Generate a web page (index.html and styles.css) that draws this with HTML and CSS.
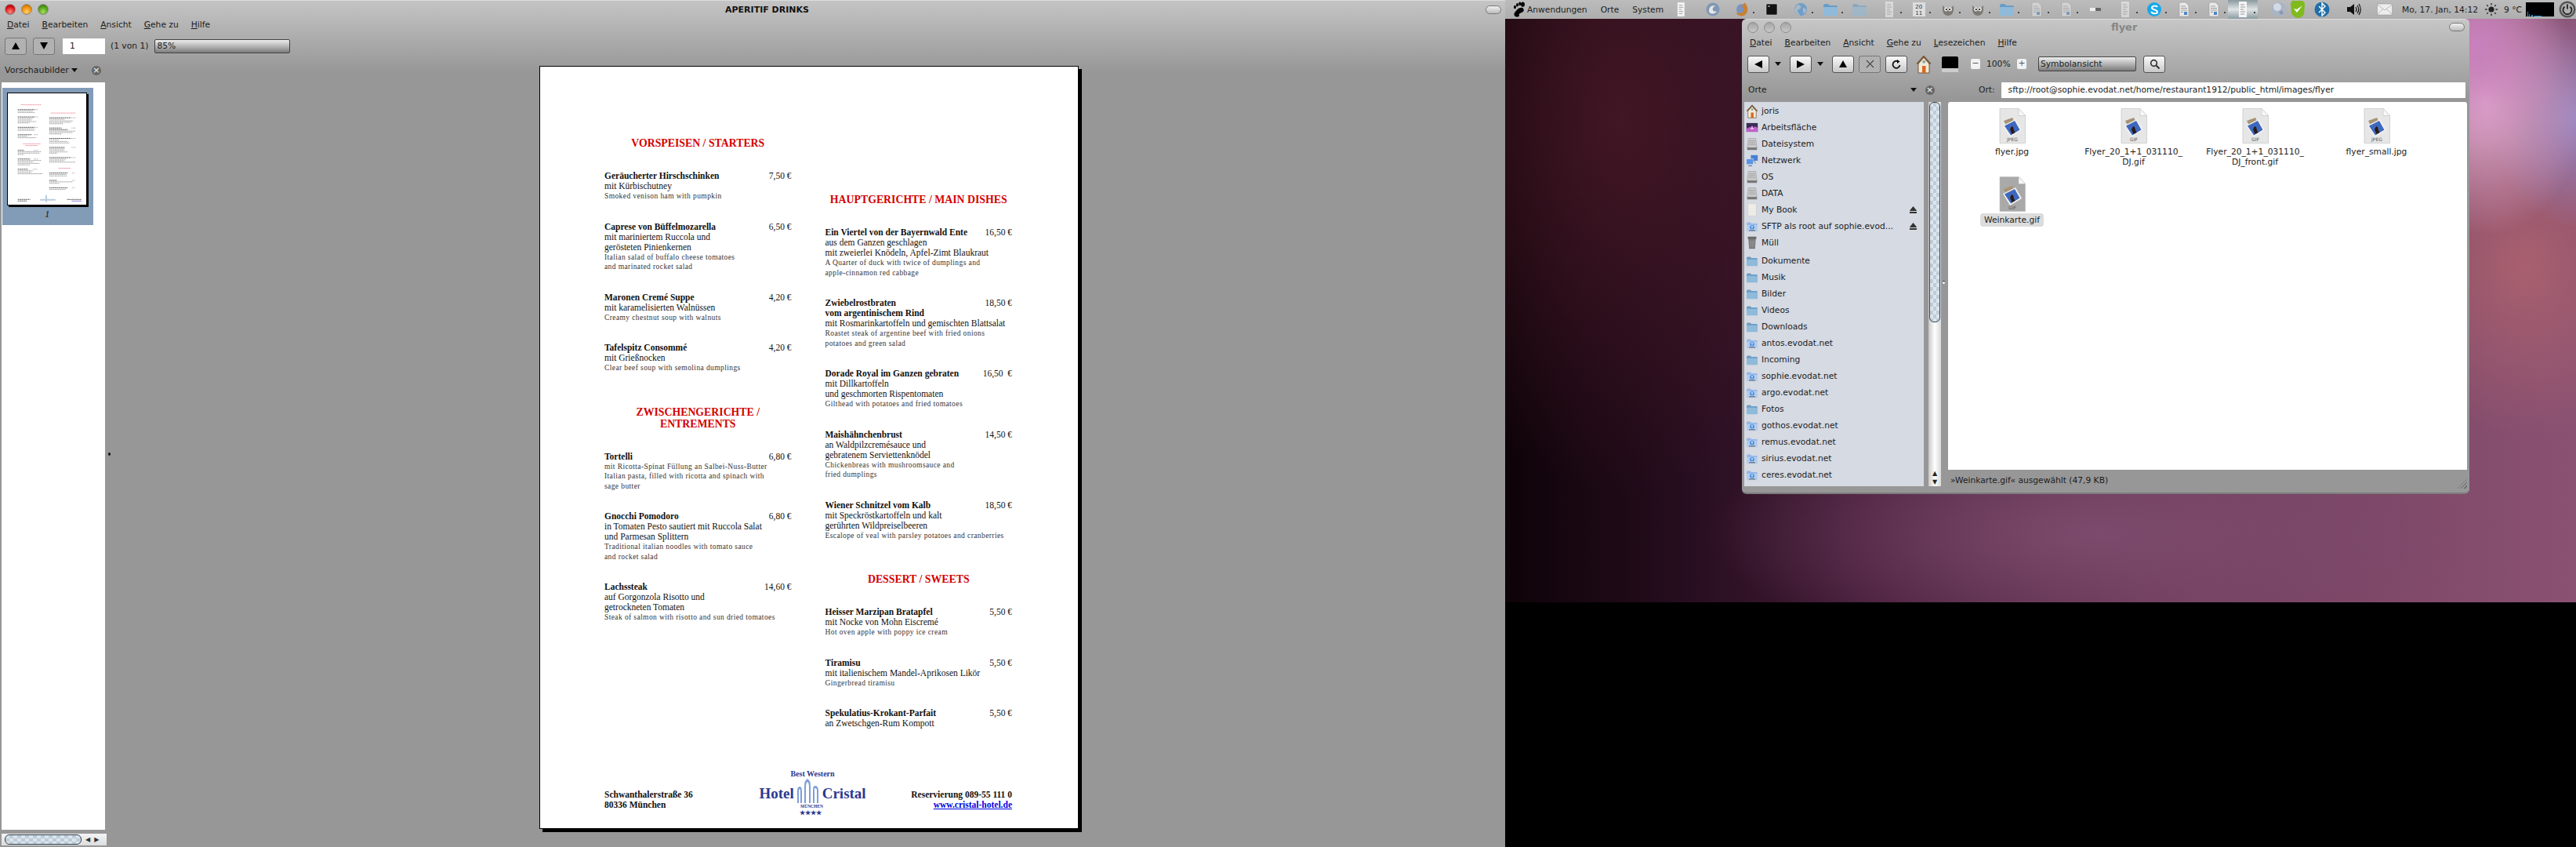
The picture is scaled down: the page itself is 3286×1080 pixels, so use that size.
FILE: index.html
```html
<!DOCTYPE html>
<html lang="de">
<head>
  <meta charset="UTF-8" />
  <title>APERITIF DRINKS</title>
  <link rel="stylesheet" href="styles.css">
</head>
<body>
  <svg class="defs" width="0" height="0">
    <defs>
      <symbol id="i-foot" viewBox="0 0 18 20">
        <ellipse cx="4.500" cy="7" rx="1.500" ry="2.200"/><ellipse cx="7.500" cy="4.300" rx="1.500" ry="2.300"/><ellipse cx="10.800" cy="2.800" rx="1.600" ry="2.400"/><ellipse cx="14.500" cy="3.600" rx="2.400" ry="3.200"/>
        <path d="M14 8c3 2 2 5-1 6-2 1-4 1.500-3 3.500.5 1-1.500 2.500-3.500 2C3.500 19 2.500 16 4.500 13.500 7 10.500 10 7 14 8z"/>
      </symbol>
      <symbol id="i-thumb" viewBox="0 0 12 20"><rect x="1" y="0" width="10" height="20" fill="#f4f4f4"/><path d="M3 4h5M3 7h6M3 10h4M3 13h6M3 16h5" stroke="#999"/></symbol>
      <symbol id="i-bird" viewBox="0 0 20 20"><circle cx="10" cy="10" r="8.500" fill="#7f97b5"/><path d="M5 12c0-5 4-8 9-6-3 0-5 2-4 5 1 2 4 2 5 1-1 4-10 5-10 0z" fill="#e6e6e6"/></symbol>
      <symbol id="i-fox" viewBox="0 0 20 20"><circle cx="10" cy="10" r="7" fill="#7b93c0"/><path d="M13 1c5 4 6 12 1 16-4 3-10 1-12-3 3 2 8 1 10-2 1-3 0-5-3-6 2-1 4-2 4-5z" fill="#c98032"/></symbol>
      <symbol id="i-term" viewBox="0 0 20 20"><rect x="3" y="3" width="14" height="14" rx="1" fill="#111" stroke="#ccc" stroke-width=".6"/><path d="M5 6h3" stroke="#ddd"/></symbol>
      <symbol id="i-globe" viewBox="0 0 20 20"><circle cx="10" cy="10" r="8" fill="#6f9ecb"/><path d="M6 4c3 0 5 1 4 4S6 9 6 12s3 3 3 6c-3 0-6-3-7-7 1-3 2-6 4-7zM13 8c2 0 4 1 4 3s-2 4-3 4-1-3-1-7z" fill="#a8b8c2"/></symbol>
      <symbol id="i-folder" viewBox="0 0 20 18"><path d="M1 4q0-2 2-2h4l2 2h8q2 0 2 2v10H1z" fill="#6b9cc4"/><path d="M1 6h18v10q0 1-1 1H2q-1 0-1-1z" fill="#8fbad9"/></symbol>
      <symbol id="i-doc" viewBox="0 0 16 20"><path d="M2 1h8l4 4v14H2z" fill="#e8e8e8" stroke="#999" stroke-width=".6"/><path d="M4 6h6M4 8.500h8M4 11h8M4 13.500h3" stroke="#8a8a8a" stroke-width=".8"/><rect x="8" y="13" width="4" height="4" fill="#4f86c6"/></symbol>
      <symbol id="i-gimp" viewBox="0 0 20 20"><path d="M3 5l3 3h8l3-3v6q-1 7-7 7T3 11z" fill="#7c7a72"/><circle cx="7.500" cy="10" r="2.400" fill="#eee"/><circle cx="12.500" cy="10" r="2.400" fill="#eee"/><circle cx="7.800" cy="10" r="1"/><circle cx="12.200" cy="10" r="1"/></symbol>
      <symbol id="i-skype" viewBox="0 0 20 20"><circle cx="10" cy="10" r="9" fill="#18a8e8"/><path d="M14 7c-1-2-7-2-7 1s7 2 7 5-6 3-8 0" fill="none" stroke="#fff" stroke-width="2"/></symbol>
      <symbol id="i-moon" viewBox="0 0 20 22"><circle cx="10" cy="11" r="9.500" fill="#a9b5c6"/><circle cx="8" cy="8" r="5" fill="#d4dae4"/><circle cx="13" cy="15" r="2.500" fill="#8c99ab"/></symbol>
      <symbol id="i-shield" viewBox="0 0 20 24"><path d="M3 1h12q4 1 4 5l-1 12q-3 5-8 5-6-2-8-6L1 4z" fill="#7fba1e"/><path d="M5 11l4 5 7-9-7 5z" fill="#fff"/></symbol>
      <symbol id="i-bt" viewBox="0 0 20 22"><circle cx="10" cy="11" r="9.500" fill="#1f6ea8"/><path d="M6 7l8 8-4 4V3l4 4-8 8" fill="none" stroke="#fff" stroke-width="1.400"/></symbol>
      <symbol id="i-speaker" viewBox="0 0 20 20"><path d="M2 7h4l5-4v14l-5-4H2z" fill="#111"/><path d="M13 7q2 3 0 6M15 5q3.500 5 0 10M17 3q4.500 7 0 14" fill="none" stroke="#111" stroke-width="1.200"/></symbol>
      <symbol id="i-mail" viewBox="0 0 20 16"><rect x=".5" y="1" width="19" height="14" fill="#eee" stroke="#999" stroke-width=".6"/><path d="M1 2l9 7 9-7M1 14l7-7M19 14l-7-7" fill="none" stroke="#aaa" stroke-width=".8"/></symbol>
      <symbol id="i-sun" viewBox="0 0 20 20"><circle cx="10" cy="10" r="4" fill="#222"/><path d="M10 1v3M10 16v3M1 10h3M16 10h3M3.500 3.500l2 2M14.500 14.500l2 2M3.500 16.500l2-2M14.500 5.500l2-2" stroke="#333" stroke-width="1.600"/></symbol>
      <symbol id="i-power" viewBox="0 0 22 24"><circle cx="11" cy="12" r="10.500" fill="#555"/><circle cx="11" cy="12" r="8" fill="#b0b0b0"/><path d="M7.500 8.500a5.500 5.500 0 1 0 7 0" fill="none" stroke="#222" stroke-width="1.800"/><path d="M11 5.500v6" stroke="#222" stroke-width="1.800"/></symbol>
      <symbol id="i-home" viewBox="0 0 20 24"><path d="M10 1L1 11h2v12h14V11h2z" fill="#f2ead8" stroke="#6b4d2f" stroke-width=".9"/><path d="M10 1L1 11l2 1 7-8 7 8 2-1z" fill="#7a5a3a"/><rect x="8" y="14" width="4.500" height="9" fill="#d9681e"/><rect x="8.500" y="7" width="3.500" height="3.500" fill="#8aa"/></symbol>
      <symbol id="i-desk" viewBox="0 0 20 18"><rect x="1" y="2" width="18" height="14" fill="#3a2b55"/><path d="M1 11l6-3 3 3 5-4 4 3v6H1z" fill="#c060c8"/><path d="M7 12l3-6 3 6z" fill="#e9b6ef"/></symbol>
      <symbol id="i-hdd" viewBox="0 0 20 22"><path d="M4 2h12l2 16H2z" fill="#c9c9c9" stroke="#888" stroke-width=".6"/><path d="M5 6h10M5 9h10M4.500 12h11" stroke="#999"/><rect x="2" y="17" width="16" height="4" fill="#777"/></symbol>
      <symbol id="i-net" viewBox="0 0 20 20"><rect x="8" y="1" width="11" height="9" fill="#4a7fd0"/><rect x="1" y="7" width="11" height="9" fill="#5c93e4" stroke="#e0e8f4" stroke-width=".7"/><path d="M4 18h6M12 10l4 4" stroke="#567" stroke-width="1.200"/></symbol>
      <symbol id="i-book" viewBox="0 0 20 22"><rect x="3" y="1" width="14" height="20" rx="1" fill="#eeece6" stroke="#c8c8c0" stroke-width=".6"/></symbol>
      <symbol id="i-remote" viewBox="0 0 20 18"><path d="M1 4q0-2 2-2h4l2 2h8q2 0 2 2v10H1z" fill="#93b6e8"/><path d="M1 6h18v10q0 1-1 1H2q-1 0-1-1z" fill="#b2cdf0"/><circle cx="10" cy="10" r="3.500" fill="#2f7fd6"/><path d="M10 7v6M8 9h4" stroke="#fff"/><rect x="5" y="14.500" width="10" height="1.500" fill="#666"/></symbol>
      <symbol id="i-trash" viewBox="0 0 20 22"><rect x="3" y="1" width="14" height="4" fill="#666"/><path d="M4 5h12l-1 16H5z" fill="#777"/><path d="M7 7v12M10 7v12M13 7v12" stroke="#aaa"/></symbol>
      <symbol id="i-file" viewBox="0 0 36 46">
        <path class="file-page" d="M2 .5h24l8.500 9v35H2z"/><path d="M26 .5v9h8.500z" fill="#f8f8f8" stroke="#b5b5b5" stroke-width=".5"/>
        <path d="M7 16l11-4 4 8-11 4z" fill="#a79474"/>
        <path d="M6 22l16-8 8 14-15 9z" fill="#f2f2f2"/><path d="M8 22.500l13-6.500 6.500 11.500L16 34.500z" fill="#3e68bd"/>
        <path d="M15 27l2-4 2 1 1 4 1.500 3-4 2z" fill="#2b1a14"/>
      </symbol>
    </defs>
  </svg>

  <div class="screen">
    <!-- PDF viewer, left monitor -->
    <section class="doc-window">
      <header class="doc-titlebar">
        <span class="light red"></span><span class="light orange"></span><span class="light green"></span>
        <span class="doc-title">APERITIF DRINKS</span>
        <span class="pill"></span>
      </header>
      <nav class="menubar doc-menu">
        <span><u>D</u>atei</span><span><u>B</u>earbeiten</span><span><u>A</u>nsicht</span><span><u>G</u>ehe zu</span><span><u>H</u>ilfe</span>
      </nav>
      <div class="doc-toolbar">
        <span class="btn hatched"><svg width="10" height="9" viewBox="0 0 10 9"><path d="M5 0l5 9H0z"/></svg></span>
        <span class="btn hatched"><svg width="10" height="9" viewBox="0 0 10 9"><path d="M0 0h10L5 9z"/></svg></span>
        <span class="page-entry">1</span>
        <span class="page-count">(1 von 1)</span>
        <span class="combo zoom-combo">85%</span>
      </div>
      <div class="doc-body">
        <aside class="doc-side">
          <div class="side-head">
            <span>Vorschaubilder</span><span class="caret"></span>
            <span class="close-x">×</span>
          </div>
          <div class="thumbs">
            <figure class="thumb-box">
              <svg class="thumb" width="102" height="144" viewBox="0 0 102 144">
                <path stroke="#444" stroke-width="1" stroke-dasharray="1.200 .5" fill="none" d="M13 20.700h22M13 30.300h22M13 43.800h22M13 53.400h18M13 73.700h8M13 85h16M13 98.300h13M54 31.400h28M54 44.700h16M54 46.800h24M54 58.200h28M54 69.900h20M54 83.200h28M54 103.200h24M54 112.800h10M54 122.400h24M13 137.600h16M13 139.600h12M77 137.600h19"/>
                <path stroke="#888" stroke-width=".9" stroke-dasharray="1.200 .6" fill="none" d="M13 22.600h20M13 24.600h22M13 32.300h20M13 34.300h18M13 36.300h24M13 38h15M13 45.700h22M13 47.700h22M13 55.400h12M13 57.300h24M13 75.600h30M13 77.400h28M13 79.200h8M13 86.900h30M13 88.800h20M13 90.700h28M13 92.600h16M13 100.300h20M13 102.300h18M13 104.200h32M54 33.300h20M54 35.400h31M54 37.300h28M54 39.100h18M54 48.700h34M54 50.600h30M54 52.400h16M54 60.100h12M54 62.200h24M54 64.100h26M54 71.800h20M54 73.700h20M54 75.800h24M54 77.400h10M54 85.200h22M54 87.200h20M54 89.100h34M54 105.100h22M54 107h23M54 114.700h30M54 116.600h13M54 124.500h21"/>
                <path stroke="#888" stroke-width=".9" stroke-dasharray="1 1" fill="none" d="M34 20.700h5M34 30.300h5M34 43.800h5M34 53.400h5M34 73.700h5M34 85h5M33 98.300h6M83 31.400h5M83 44.700h5M83 58.200h5M83 69.900h5M83 83.200h5M84 103.200h4M84 112.800h4M84 122.400h4"/>
                <path stroke="#e78" stroke-width=".9" stroke-dasharray="1.300 .6" fill="none" d="M17 14.500h26M20 65.300h23M23 67.500h16M56 25.200h32M66 97h16"/>
                <path stroke="#bcd" stroke-width="2" fill="none" d="M42 138h20M50 132v9"/><path stroke="#88d" stroke-width="1" fill="none" d="M83 139.700h13"/>
              </svg>
              <figcaption>1</figcaption>
            </figure>
          </div>
          <div class="hscroll"><span class="hscroll-thumb"></span><span class="arr">◀</span><span class="arr">▶</span></div>
        </aside>
        <span class="pane-dot doc-dot"></span>
        <main class="doc-view">
          <article class="page">
            <div class="menu-cols">
              <div class="menu-col">
                <h2>VORSPEISEN / STARTERS</h2>
                <div class="item"><div class="item-head"><b>Geräucherter Hirschschinken</b><span>7,50 €</span></div><p>mit Kürbischutney</p><p class="en">Smoked venison ham with pumpkin</p></div>
                <div class="item"><div class="item-head"><b>Caprese von Büffelmozarella</b><span>6,50 €</span></div><p>mit mariniertem Ruccola und</p><p>gerösteten Pinienkernen</p><p class="en">Italian salad of buffalo cheese tomatoes</p><p class="en">and marinated rocket salad</p></div>
                <div class="item"><div class="item-head"><b>Maronen Cremé Suppe</b><span>4,20 €</span></div><p>mit karamelisierten Walnüssen</p><p class="en">Creamy chestnut soup with walnuts</p></div>
                <div class="item"><div class="item-head"><b>Tafelspitz Consommé</b><span>4,20 €</span></div><p>mit Grießnocken</p><p class="en">Clear beef soup with semolina dumplings</p></div>
                <h2 class="mid">ZWISCHENGERICHTE /<br>ENTREMENTS</h2>
                <div class="item"><div class="item-head"><b>Tortelli</b><span>6,80 €</span></div><p class="en">mit Ricotta-Spinat Füllung an Salbei-Nuss-Butter</p><p class="en">Italian pasta, filled with ricotta and spinach with</p><p class="en">sage butter</p></div>
                <div class="item"><div class="item-head"><b>Gnocchi Pomodoro</b><span>6,80 €</span></div><p>in Tomaten Pesto sautiert mit Ruccola Salat</p><p>und Parmesan Splittern</p><p class="en">Traditional italian noodles with tomato sauce</p><p class="en">and rocket salad</p></div>
                <div class="item"><div class="item-head"><b>Lachssteak</b><span>14,60 €</span></div><p>auf Gorgonzola Risotto und</p><p>getrockneten Tomaten</p><p class="en">Steak of salmon with risotto and sun dried tomatoes</p></div>
              </div>
              <div class="menu-col right-col">
                <h2>HAUPTGERICHTE / MAIN DISHES</h2>
                <div class="item"><div class="item-head"><b>Ein Viertel von der Bayernwald Ente</b><span>16,50 €</span></div><p>aus dem Ganzen geschlagen</p><p>mit zweierlei Knödeln, Apfel-Zimt Blaukraut</p><p class="en">A Quarter of duck with twice of dumplings and</p><p class="en">apple-cinnamon red cabbage</p></div>
                <div class="item"><div class="item-head"><b>Zwiebelrostbraten</b><span>18,50 €</span></div><p><b>vom argentinischem Rind</b></p><p>mit Rosmarinkartoffeln und gemischten Blattsalat</p><p class="en">Roastet steak of argentine beef with fried onions</p><p class="en">potatoes and green salad</p></div>
                <div class="item"><div class="item-head"><b>Dorade Royal im Ganzen gebraten</b><span>16,50 &nbsp;€</span></div><p>mit Dillkartoffeln</p><p>und geschmorten Rispentomaten</p><p class="en">Gilthead with potatoes and fried tomatoes</p></div>
                <div class="item"><div class="item-head"><b>Maishähnchenbrust</b><span>14,50 €</span></div><p>an Waldpilzcremésauce und</p><p>gebratenem Serviettenknödel</p><p class="en">Chickenbreas with mushroomsauce and</p><p class="en">fried dumplings</p></div>
                <div class="item"><div class="item-head"><b>Wiener Schnitzel vom Kalb</b><span>18,50 €</span></div><p>mit Speckröstkartoffeln und kalt</p><p>gerührten Wildpreiselbeeren</p><p class="en">Escalope of veal with parsley potatoes and cranberries</p></div>
                <h2 class="mid">DESSERT / SWEETS</h2>
                <div class="item"><div class="item-head"><b>Heisser Marzipan Bratapfel</b><span>5,50 €</span></div><p>mit Nocke von Mohn Eiscremé</p><p class="en">Hot oven apple with poppy ice cream</p></div>
                <div class="item"><div class="item-head"><b>Tiramisu</b><span>5,50 €</span></div><p>mit italienischem Mandel-Aprikosen Likör</p><p class="en">Gingerbread tiramisu</p></div>
                <div class="item"><div class="item-head"><b>Spekulatius-Krokant-Parfait</b><span>5,50 €</span></div><p>an Zwetschgen-Rum Kompott</p></div>
              </div>
            </div>
            <footer class="page-foot">
              <div class="addr"><b>Schwanthalerstraße 36</b><br><b>80336 München</b></div>
              <div class="logo">
                <div class="logo-top">Best Western</div>
                <div class="logo-main"><span>Hotel</span>
                  <svg width="30" height="31" viewBox="0 0 30 31"><path d="M1 31V16q0-6 3-6t3 6v15h-2V17q0-4-1-4t-1 4v14zM10 31V10q0-8 4-10 4 2 4 10v21h-2V11q0-6-2-7-2 1-2 7v20zM21 31V14q0-5 3-5t4 5v17h-2V15q0-3-2-3t-1 3v16z" fill="#7e9fd8"/></svg>
                  <span>Cristal</span></div>
                <div class="logo-city">MÜNCHEN</div>
                <div class="logo-stars">★★★★</div>
              </div>
              <div class="contact"><b>Reservierung 089-55 111 0</b><br><a href="#">www.cristal-hotel.de</a></div>
            </footer>
          </article>
        </main>
      </div>
    </section>

    <!-- GNOME desktop, right monitor -->
    <section class="desktop">
      <header class="panel">
        <svg class="foot" width="18" height="20"><use href="#i-foot"/></svg>
        <nav class="panel-menu"><span>Anwendungen</span><span>Orte</span><span>System</span></nav>
        <svg class="panel-thumb" width="12" height="20"><use href="#i-thumb"/></svg>
        <div class="tasks">
          <span class="task"><svg width="20" height="20"><use href="#i-bird"/></svg></span>
          <span class="task dot"><svg width="20" height="20"><use href="#i-fox"/></svg></span>
          <span class="task"><svg width="20" height="20"><use href="#i-term"/></svg></span>
          <span class="task dot"><svg width="20" height="20"><use href="#i-globe"/></svg></span>
          <span class="task dot"><svg width="20" height="18"><use href="#i-folder"/></svg></span>
          <span class="task faded"><svg width="20" height="18"><use href="#i-folder"/></svg></span>
          <span class="task dot faded"><svg width="14" height="20"><use href="#i-thumb"/></svg></span>
          <span class="task dot"><span class="cal">20<br>11</span></span>
          <span class="task dot"><svg width="20" height="20"><use href="#i-gimp"/></svg></span>
          <span class="task dot"><svg width="20" height="20"><use href="#i-gimp"/></svg></span>
          <span class="task dot"><svg width="20" height="18"><use href="#i-folder"/></svg></span>
          <span class="task dot faded"><svg width="16" height="20"><use href="#i-doc"/></svg></span>
          <span class="task dot faded"><svg width="16" height="20"><use href="#i-doc"/></svg></span>
          <span class="task faded"><span class="toggle"></span></span>
          <span class="task dot faded"><svg width="14" height="20"><use href="#i-thumb"/></svg></span>
          <span class="task dot"><svg width="20" height="20"><use href="#i-skype"/></svg></span>
          <span class="task dot"><svg width="16" height="20"><use href="#i-doc"/></svg></span>
          <span class="task dot"><svg width="16" height="20"><use href="#i-doc"/></svg></span>
          <span class="task dot active"><svg width="14" height="20"><use href="#i-thumb"/></svg></span>
        </div>
        <div class="tray">
          <svg class="t-moon" width="20" height="22"><use href="#i-moon"/></svg>
          <svg class="t-shield" width="20" height="24"><use href="#i-shield"/></svg>
          <svg class="t-bt" width="20" height="22"><use href="#i-bt"/></svg>
          <svg class="t-wide" width="20" height="20"><use href="#i-speaker"/></svg>
          <svg class="t-wide" width="20" height="16"><use href="#i-mail"/></svg>
          <span class="clock">Mo, 17. Jan, 14:12</span>
          <svg class="t-sun" width="18" height="18"><use href="#i-sun"/></svg>
          <span class="temp">9 °C</span>
          <span class="graph"><svg width="36" height="18"><path d="M2 18v-6h1v6zM4 18v-3h1v3zM7 18v-2h2v2zM11 18v-1h9v1z" fill="#1b8fd8"/></svg></span>
          <svg class="t-power" width="22" height="24"><use href="#i-power"/></svg>
        </div>
      </header>

      <section class="fm-window">
        <header class="fm-title">
          <span class="light off"></span><span class="light off"></span><span class="light off"></span>
          <span class="fm-name">flyer</span>
          <span class="pill"></span>
        </header>
        <nav class="menubar fm-menu">
          <span><u>D</u>atei</span><span><u>B</u>earbeiten</span><span><u>A</u>nsicht</span><span><u>G</u>ehe zu</span><span><u>L</u>esezeichen</span><span><u>H</u>ilfe</span>
        </nav>
        <div class="fm-toolbar">
          <span class="btn"><svg width="10" height="10" viewBox="0 0 10 10"><path d="M10 0v10L0 5z"/></svg></span>
          <span class="drop"></span>
          <span class="btn"><svg width="10" height="10" viewBox="0 0 10 10"><path d="M0 0v10l10-5z"/></svg></span>
          <span class="drop"></span>
          <span class="btn"><svg width="10" height="9" viewBox="0 0 10 9"><path d="M5 0l5 9H0z"/></svg></span>
          <span class="btn hatched"><svg width="11" height="11" viewBox="0 0 11 11"><path d="M1 1l9 9M10 1l-9 9" stroke="#555" stroke-width="1.400"/></svg></span>
          <span class="btn"><svg width="12" height="12" viewBox="0 0 12 12"><path d="M10.500 7a4.500 4.500 0 1 1-2-4.500" fill="none" stroke="#111" stroke-width="1.800"/><path d="M7 0l3.500 2.500L7 5z"/></svg></span>
          <svg class="tb-home" width="20" height="24"><use href="#i-home"/></svg>
          <span class="tb-monitor"></span>
          <span class="zoom-btn">−</span>
          <span class="zoom-val">100%</span>
          <span class="zoom-btn">+</span>
          <span class="combo view-combo">Symbolansicht</span>
          <span class="btn search"><svg width="13" height="13" viewBox="0 0 13 13"><circle cx="5.500" cy="5.500" r="3.800" fill="none" stroke="#333" stroke-width="1.700"/><path d="M8.500 8.500l4 4" stroke="#333" stroke-width="2"/></svg></span>
        </div>
        <div class="fm-main">
          <div class="places-head">
            <span>Orte</span><span class="caret"></span><span class="close-x">×</span>
          </div>
          <div class="loc-bar">
            <span class="loc-label">Ort:</span>
            <span class="loc-entry">sftp://root@sophie.evodat.net/home/restaurant1912/public_html/images/flyer</span>
          </div>
          <div class="places-wrap">
            <ul class="places">
              <li><svg width="16" height="18"><use href="#i-home"/></svg>joris</li>
              <li><svg width="16" height="15"><use href="#i-desk"/></svg>Arbeitsfläche</li>
              <li><svg width="16" height="17"><use href="#i-hdd"/></svg>Dateisystem</li>
              <li><svg width="16" height="16"><use href="#i-net"/></svg>Netzwerk</li>
              <li><svg width="16" height="17"><use href="#i-hdd"/></svg>OS</li>
              <li><svg width="16" height="17"><use href="#i-hdd"/></svg>DATA</li>
              <li><svg width="16" height="17"><use href="#i-book"/></svg>My Book<span class="eject"></span></li>
              <li><svg width="16" height="14"><use href="#i-remote"/></svg>SFTP als root auf sophie.evod...<span class="eject"></span></li>
              <li class="last-fixed"><svg width="16" height="17"><use href="#i-trash"/></svg>Müll</li>
              <li><svg width="16" height="14"><use href="#i-folder"/></svg>Dokumente</li>
              <li><svg width="16" height="14"><use href="#i-folder"/></svg>Musik</li>
              <li><svg width="16" height="14"><use href="#i-folder"/></svg>Bilder</li>
              <li><svg width="16" height="14"><use href="#i-folder"/></svg>Videos</li>
              <li><svg width="16" height="14"><use href="#i-folder"/></svg>Downloads</li>
              <li><svg width="16" height="14"><use href="#i-remote"/></svg>antos.evodat.net</li>
              <li><svg width="16" height="14"><use href="#i-folder"/></svg>Incoming</li>
              <li><svg width="16" height="14"><use href="#i-remote"/></svg>sophie.evodat.net</li>
              <li><svg width="16" height="14"><use href="#i-remote"/></svg>argo.evodat.net</li>
              <li><svg width="16" height="14"><use href="#i-folder"/></svg>Fotos</li>
              <li><svg width="16" height="14"><use href="#i-remote"/></svg>gothos.evodat.net</li>
              <li><svg width="16" height="14"><use href="#i-remote"/></svg>remus.evodat.net</li>
              <li><svg width="16" height="14"><use href="#i-remote"/></svg>sirius.evodat.net</li>
              <li><svg width="16" height="14"><use href="#i-remote"/></svg>ceres.evodat.net</li>
            </ul>
            <div class="vscroll">
              <span class="vscroll-thumb"></span>
              <span class="arr">▲</span><span class="arr">▼</span>
            </div>
          </div>
          <div class="files-wrap">
            <div class="files">
              <div class="file"><svg width="36" height="46"><use href="#i-file"/><text x="18" y="42" text-anchor="middle">JPEG</text></svg><span>flyer.jpg</span></div>
              <div class="file"><svg width="36" height="46"><use href="#i-file"/><text x="18" y="42" text-anchor="middle">GIF</text></svg><span>Flyer_20_1+1_031110_<br>DJ.gif</span></div>
              <div class="file"><svg width="36" height="46"><use href="#i-file"/><text x="18" y="42" text-anchor="middle">GIF</text></svg><span>Flyer_20_1+1_031110_<br>DJ_front.gif</span></div>
              <div class="file"><svg width="36" height="46"><use href="#i-file"/><text x="18" y="42" text-anchor="middle">JPEG</text></svg><span>flyer_small.jpg</span></div>
              <div class="file selected"><svg width="36" height="46"><use href="#i-file"/><text x="18" y="42" text-anchor="middle">GIF</text></svg><span>Weinkarte.gif</span></div>
            </div>
            <div class="statusbar">»Weinkarte.gif« ausgewählt (47,9 KB)<span class="grip"></span></div>
          </div>
          <span class="pane-dot fm-dot"></span>
        </div>
      </section>
    </section>
  </div>
</body>
</html>
```

FILE: styles.css
```css
* {
  box-sizing: border-box;
}
html, body {
  margin: 0;
  background: #000;
}
body {
  width: 3286px;
  height: 1080px;
  overflow: hidden;
  font-family: 'DejaVu Sans', sans-serif;
  font-size: 10.7px;
  color: #1c1c1c;
}
.defs {
  position: absolute;
}
.screen {
  display: flex;
  align-items: flex-start;
  width: 3286px;
  height: 1080px;
}

/* window chrome shared by both apps */
.light {
  width: 14px;
  height: 14px;
  border-radius: 50%;
  flex: none;
  margin-right: 7px;
  border: 1px solid #8a8a8a;
}
.red { background: radial-gradient(circle at 50% 75%, #ff8a80, #d80d10 60%, #8e0c0c); }
.orange { background: radial-gradient(circle at 50% 75%, #ffd070, #ee8a00 60%, #a86000); }
.green { background: radial-gradient(circle at 50% 75%, #a8e060, #4c9c10 60%, #2f6c08); }
.off { background: linear-gradient(#a4a4a4, #c8c8c8); border-color: #8c8c8c; }
.pill {
  width: 20px;
  height: 11px;
  border-radius: 6px;
  border: 1px solid #777;
  background: linear-gradient(#f0f0f0, #bbb);
  margin-left: auto;
}
.menubar {
  display: flex;
  align-items: center;
  height: 20px;
  gap: 16px;
}
.btn {
  display: flex;
  align-items: center;
  justify-content: center;
  width: 28px;
  height: 22px;
  flex: none;
  border: 1px solid #555;
  border-radius: 3px;
  background: linear-gradient(#fafafa, #c8c8c8);
}
.hatched {
  border-color: #777;
  background: repeating-conic-gradient(#858585 0 25%, #dedede 0 50%) 0 0 / 2px 2px;
}
.combo {
  display: flex;
  align-items: center;
  padding-left: 2px;
  border: 1px solid #444;
  border-radius: 2px;
  background: linear-gradient(#ededed, #bbb 45%, #7c7c7c);
}
.caret {
  width: 0;
  height: 0;
  border: 4px solid transparent;
  border-top: 5px solid #111;
  border-bottom: 0;
}
.close-x {
  display: flex;
  align-items: center;
  justify-content: center;
  width: 12px;
  height: 12px;
  border-radius: 50%;
  background: #666;
  color: #ddd;
  font-size: 11px;
  font-weight: bold;
  line-height: 1;
}
.pane-dot {
  position: absolute;
  width: 3px;
  height: 4px;
  border-radius: 50%;
  background: #111;
}

/* PDF viewer */
.doc-window {
  position: relative;
  display: flex;
  flex-direction: column;
  width: 1920px;
  height: 1080px;
  flex: none;
  border-top: 1px solid #dcdcdc;
  background: linear-gradient(#c4c4c4, #979797 90px);
}
.doc-titlebar {
  display: flex;
  align-items: center;
  height: 20px;
  padding: 2px 5px 0 6px;
}
.doc-title {
  margin-left: 856px;
  font-size: 11px;
  font-weight: bold;
  color: #111;
}
.doc-menu {
  padding-left: 9px;
}
.doc-toolbar {
  display: flex;
  align-items: center;
  height: 35px;
  padding-left: 6px;
}
.doc-toolbar .btn {
  margin-right: 8px;
}
.page-entry {
  display: flex;
  align-items: center;
  width: 54px;
  height: 20px;
  margin-left: 2px;
  padding-left: 9px;
  background: #fff;
}
.page-count {
  margin-left: 7px;
}
.zoom-combo {
  width: 173px;
  height: 18px;
  margin-left: 8px;
}
.doc-body {
  display: flex;
  flex: 1;
  min-height: 0;
}
.doc-side {
  display: flex;
  flex-direction: column;
  width: 136px;
  flex: none;
}
.side-head {
  display: flex;
  align-items: center;
  height: 29px;
  padding: 0 0 2px 6px;
  font-size: 11px;
}
.side-head .caret {
  margin-left: 3px;
}
.side-head .close-x {
  margin-left: 18px;
}
.thumbs {
  height: 953px;
  margin-left: 2px;
  width: 132px;
  padding: 7px 15px 0 1px;
  background: #fff;
}
.thumb-box {
  height: 175px;
  margin: 0;
  padding: 6px 0 0 6px;
  background: #829cb8;
}
.thumb {
  display: block;
  background: #fff;
  border: 1px solid #000;
  box-shadow: 2px 2px 0 #000;
}
.thumb-box figcaption {
  margin-top: 3px;
  padding-left: 48px;
  font: italic 13px 'Liberation Serif', serif;
}
.hscroll {
  display: flex;
  align-items: center;
  width: 134px;
  height: 15px;
  margin: 5px 0 0 2px;
  background: linear-gradient(#f4f4f4, #ddd);
}
.hscroll-thumb {
  width: 98px;
  height: 13px;
  margin-left: 4px;
  border: 1.500px solid #2f3f4c;
  border-radius: 6px;
  background: repeating-conic-gradient(#bdccd8 0 25%, #dce5ec 0 50%) 0 0 / 10px 8px;
}
.hscroll .arr {
  margin-left: 5px;
  font-size: 8px;
  color: #333;
}
.doc-dot {
  left: 138px;
  top: 576px;
}
.doc-view {
  flex: 1;
  padding: 8px 0 0 552px;
}
.page {
  display: flex;
  flex-direction: column;
  width: 688px;
  height: 973px;
  padding: 90px 84px 0 82px;
  border: 1px solid #000;
  background: #fff;
  box-shadow: 4px 4px 0 #000;
  font-family: 'Liberation Serif', serif;
  font-size: 11.5px;
  line-height: 13px;
  color: #111;
}
.menu-cols {
  display: flex;
  gap: 43px;
}
.menu-col {
  width: 239px;
}
.right-col {
  padding-top: 72px;
}
.menu-col h2 {
  margin: 0 0 28px;
  font-size: 13.800px;
  line-height: 15px;
  font-weight: bold;
  text-align: center;
  color: #d40000;
}
.menu-col h2.mid {
  margin-top: 42px;
}
.item {
  margin-bottom: 26px;
}
.item-head {
  display: flex;
  justify-content: space-between;
}
.item p {
  margin: 0;
}
.item p.en {
  font-size: 9.500px;
  letter-spacing: .4px;
  line-height: 12.500px;
  color: #333;
}
.page-foot {
  display: grid;
  grid-template-columns: 199px 133px 1fr;
  align-items: end;
  margin-top: auto;
  padding-bottom: 15px;
}
.addr, .contact {
  padding-bottom: 8px;
}
.contact {
  text-align: right;
}
.contact a {
  color: #0000e0;
  font-weight: bold;
}
.logo {
  display: flex;
  flex-direction: column;
  align-items: center;
  color: #2b3990;
  font-weight: bold;
}
.logo-top {
  font-size: 10px;
  line-height: 12px;
}
.logo-main {
  display: flex;
  align-items: flex-end;
  gap: 3px;
  font-size: 19px;
  line-height: 24px;
}
.logo-city {
  font-size: 5.500px;
  line-height: 8px;
  margin-right: 2px;
}
.logo-stars {
  font-size: 8px;
  line-height: 9px;
  margin-right: 6px;
}

/* desktop with wallpaper */
.desktop {
  position: relative;
  width: 1366px;
  height: 768px;
  flex: none;
  background:
    radial-gradient(110px 130px at 1240px 60px, #c880bc, transparent),
    radial-gradient(130px 170px at 1250px 130px, #e4aed0, transparent),
    radial-gradient(110px 140px at 1366px 150px, #9a86c0, transparent),
    radial-gradient(180px 220px at 1300px 340px, #a8606e, transparent),
    radial-gradient(500px 160px at 760px 680px, #7c4a6c, transparent),
    radial-gradient(300px 480px at 150px 150px, #421624, transparent),
    linear-gradient(90deg, #0e0308, #1f0a18 12%, #451c39 35%, #74405f 65%, #8a5172);
}
.panel {
  display: flex;
  align-items: center;
  height: 24px;
  padding-left: 8px;
  background: linear-gradient(#bcbcbc, #aeaeae);
}
.foot {
  flex: none;
}
.panel-menu {
  display: flex;
  gap: 17px;
  margin-left: 2px;
}
.panel-thumb {
  margin-left: 17px;
}
.tasks {
  display: flex;
  margin-left: 16px;
}
.task {
  position: relative;
  display: flex;
  align-items: center;
  justify-content: center;
  width: 37.600px;
  height: 24px;
}
.task.dot::after {
  content: "";
  position: absolute;
  right: 3px;
  top: 15px;
  width: 2px;
  height: 2px;
  background: #444;
}
.faded svg {
  opacity: .55;
}
.active {
  background: linear-gradient(#8a9aa0, #dfe3e4 50%, #8a9aa0);
}
.cal {
  width: 16px;
  padding-top: 2px;
  font-size: 7px;
  line-height: 8px;
  color: #334;
  background: #ddd;
  text-align: center;
}
.toggle {
  width: 14px;
  height: 4px;
  background: linear-gradient(90deg, #eee 50%, #666 50%);
}
.tray {
  display: flex;
  align-items: center;
  margin-left: 17px;
}
.t-shield {
  margin-left: 4px;
}
.t-bt {
  margin-left: 11px;
}
.t-wide {
  margin-left: 20px;
}
.clock {
  margin-left: 12px;
  width: 98px;
  white-space: nowrap;
}
.t-sun {
  margin-left: 7px;
}
.temp {
  margin-left: 7px;
  width: 23px;
}
.graph {
  display: block;
  width: 36px;
  height: 18px;
  margin-left: 5px;
  background: #000;
}
.t-power {
  margin-left: 6px;
}

/* file manager window, free on the desktop */
.fm-window {
  position: absolute;
  left: 302px;
  top: 24px;
  display: flex;
  flex-direction: column;
  width: 928px;
  height: 606px;
  border-radius: 6px;
  border-top: 1px solid #dedede;
  border-bottom: 2px solid #7c7c7c;
  background: linear-gradient(#c6c6c6, #979797 100px);
}
.fm-title {
  position: relative;
  display: flex;
  align-items: center;
  height: 19px;
  padding: 0 6px 0 7px;
}
.fm-name {
  position: absolute;
  left: 471px;
  font-size: 13px;
  font-weight: bold;
  color: #868686;
}
.fm-menu {
  padding-left: 10px;
}
.fm-toolbar {
  display: flex;
  align-items: center;
  height: 35px;
  padding-left: 7px;
}
.drop {
  width: 0;
  height: 0;
  margin: 0 11px 0 7px;
  border: 4px solid transparent;
  border-top: 5px solid #111;
  border-bottom: 0;
}
.fm-toolbar .btn + .btn {
  margin-left: 6px;
}
.tb-home {
  margin-left: 11px;
}
.tb-monitor {
  width: 21px;
  height: 20px;
  margin-left: 13px;
  border-radius: 2px 2px 0 0;
  background: linear-gradient(#000 75%, #ccc 75%);
}
.zoom-btn {
  display: flex;
  align-items: center;
  justify-content: center;
  width: 14px;
  height: 15px;
  border: 1px solid #aaa;
  border-radius: 3px;
  background: #f2f2f2;
  color: #555;
  line-height: 1;
}
.tb-monitor + .zoom-btn {
  margin-left: 15px;
}
.zoom-val {
  width: 45px;
  padding-left: 7px;
  white-space: nowrap;
}
.view-combo {
  width: 125px;
  height: 19px;
  margin-left: 14px;
}
.fm-toolbar .search {
  margin-left: 9px;
}
.fm-main {
  position: relative;
  display: grid;
  flex: 1;
  min-height: 0;
  grid-template-columns: 263px 1fr;
  grid-template-rows: 31px 1fr;
}
.places-head {
  display: flex;
  align-items: center;
  padding-left: 8px;
}
.places-head .caret {
  margin-left: 183px;
}
.places-head .close-x {
  margin-left: 11px;
}
.loc-bar {
  display: flex;
  align-items: center;
  padding-right: 5px;
}
.loc-label {
  margin-left: 39px;
}
.loc-entry {
  flex: 1;
  height: 20px;
  margin-left: 8px;
  padding-left: 9px;
  line-height: 20px;
  background: #fff;
}
.places-wrap {
  display: flex;
  height: 490px;
  padding-left: 3px;
}
.places {
  width: 229px;
  margin: 0;
  padding: 0;
  overflow: hidden;
  list-style: none;
  background: #d5dae3;
}
.places li {
  display: flex;
  align-items: center;
  gap: 4px;
  height: 21px;
  padding: 2px 9px 0 2px;
}
.places svg {
  flex: none;
}
.places .last-fixed {
  margin-bottom: 2px;
}
.eject {
  width: 9px;
  height: 9px;
  margin-left: auto;
  background: linear-gradient(#333 70%, transparent 70%, transparent 80%, #333 80%);
  clip-path: polygon(50% 0, 100% 60%, 100% 100%, 0 100%, 0 60%);
}
.vscroll {
  display: flex;
  flex-direction: column;
  align-items: center;
  width: 16px;
  margin-left: 6px;
  background: linear-gradient(90deg, #c8c8c8, #fff 50%, #d8d8d8);
}
.vscroll-thumb {
  width: 14px;
  height: 281px;
  margin-bottom: 187px;
  border: 1.500px solid #38454f;
  border-radius: 6px;
  background: repeating-conic-gradient(#bdccd8 0 25%, #dce5ec 0 50%) 0 0 / 8px 10px;
}
.vscroll .arr {
  font-size: 8px;
  line-height: 11px;
  color: #222;
}
.files-wrap {
  display: flex;
  flex-direction: column;
  padding-right: 3px;
}
.files {
  display: grid;
  grid-template-columns: repeat(4, 155px);
  grid-auto-rows: 87px;
  align-content: start;
  height: 469px;
  padding: 8px 0 0 4px;
  border-radius: 3px 3px 0 0;
  background: #fff;
}
.file {
  display: flex;
  flex-direction: column;
  align-items: center;
  text-align: center;
  line-height: 13px;
}
.file svg {
  flex: none;
  margin-bottom: 3px;
}
.file-page {
  fill: var(--file-page, #e6e6e6);
  stroke: #bdbdbd;
  stroke-width: .6;
}
.file text {
  font-size: 6px;
  fill: #555;
}
.selected {
  --file-page: #a9a9a9;
}
.selected span {
  padding: 2px 5px;
  margin-top: -2px;
  border-radius: 4px;
  background: #dcdcdc;
}
.statusbar {
  position: relative;
  padding: 7px 0 0 3px;
}
.grip {
  position: absolute;
  right: 0;
  bottom: -4px;
  width: 12px;
  height: 12px;
  background: repeating-linear-gradient(135deg, transparent 0 2px, #666 2px 3px);
  clip-path: polygon(100% 0, 100% 100%, 0 100%);
}
.fm-dot {
  left: 256px;
  top: 259px;
  background: #fff;
  border-top: 1px solid #111;
}
```
